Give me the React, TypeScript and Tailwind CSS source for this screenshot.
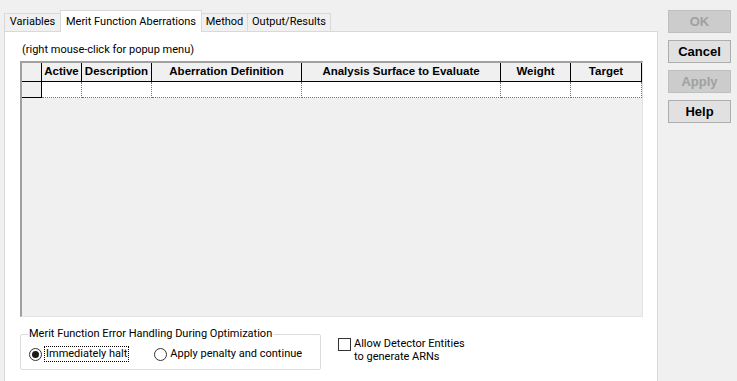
import React from 'react';

const ui = { fontFamily: 'Roboto, "Liberation Sans", sans-serif' };
const hdr = { fontFamily: '"Liberation Sans", Arial, sans-serif' };

const columns = [
  { label: 'Active', w: 'w-[40px]' },
  { label: 'Description', w: 'w-[70px]' },
  { label: 'Aberration Definition', w: 'w-[150px]' },
  { label: 'Analysis Surface to Evaluate', w: 'w-[199px]' },
  { label: 'Weight', w: 'w-[70px]' },
  { label: 'Target', w: 'w-[71px]' },
];

const tabs = [
  { label: 'Variables', w: 'w-[57px]' },
  { label: 'Merit Function Aberrations', w: 'w-[142px]' },
  { label: 'Method', w: 'w-[47px]' },
  { label: 'Output/Results', w: 'w-[84px]' },
];

function Tabs() {
  return (
    <div className="flex items-end h-[21px] relative z-10 whitespace-nowrap">
      {tabs.map((t, i) =>
        i === 1 ? (
          <div
            key={t.label}
            className={`${t.w} h-[22px] -mb-[1px] -ml-[1px] bg-white border border-b-0 border-[#d9d9d9] flex justify-center pt-[3px] text-[11px] text-black`}
          >
            {t.label}
          </div>
        ) : (
          <div
            key={t.label}
            className={`${t.w} h-[18px] bg-[#f0f0f0] border border-b-0 border-[#d9d9d9] flex items-center justify-center text-[11px] text-black ${i > 1 ? '-ml-[1px]' : ''}`}
          >
            {t.label}
          </div>
        )
      )}
    </div>
  );
}

function Grid() {
  return (
    <div className="w-[623px] h-[256px] border-t-2 border-l-2 border-t-[#a0a0a0] border-l-[#a0a0a0] border-r border-b border-r-[#e3e3e3] border-b-[#e3e3e3] bg-[#f0f0f0]">
      <div className="flex h-[19px] text-[11.5px] font-bold text-black" style={hdr}>
        <div className="w-[20px] border-r border-b border-black bg-[#f0f0f0]" />
        {columns.map((c) => (
          <div
            key={c.label}
            className={`${c.w} border-r border-b border-black bg-[#f0f0f0] flex items-center justify-center leading-none`}
          >
            {c.label}
          </div>
        ))}
      </div>
      <div className="flex h-[16px]">
        <div className="w-[20px] border-r border-b border-black bg-[#f0f0f0]" />
        {columns.map((c) => (
          <div key={c.label} className={`${c.w} bg-white border-r border-b border-dotted border-[#707070]`} />
        ))}
      </div>
    </div>
  );
}

function DlgButton({ label, disabled }: { label: string; disabled?: boolean }) {
  return (
    <button
      className={`w-[63px] h-[23px] border text-[13px] font-bold flex items-center justify-center ${
        disabled ? 'bg-[#cccccc] border-[#bfbfbf] text-[#a0a0a0]' : 'bg-[#e1e1e1] border-[#adadad] text-black'
      }`}
      style={hdr}
    >
      {label}
    </button>
  );
}

export default function App() {
  return (
    <div className="w-[737px] h-[381px] bg-[#f0f0f0] flex overflow-hidden" style={ui}>
      <div className="pl-[4px] pt-[10px] flex flex-col">
        <Tabs />
        <div className="w-[654px] h-[350px] bg-white border border-b-0 border-[#d9d9d9] pl-[15px] pt-[10px]">
          <div className="text-[11px] leading-[16px] text-black pl-[2px] mb-[3px] whitespace-nowrap">(right mouse-click for popup menu)</div>
          <Grid />
          <div className="flex mt-[10px] whitespace-nowrap">
            <fieldset className="w-[301px] h-[43px] border border-[#dcdcdc] rounded-[2px] px-[8px]">
              <legend className="text-[11px] leading-[14px] px-[1px] -ml-[1px] text-black">
                Merit Function Error Handling During Optimization
              </legend>
              <div className="flex items-center mt-[5px] text-[11px] text-black">
                <span className="w-[13px] h-[13px] rounded-full border border-[#333333] bg-white flex items-center justify-center">
                  <span className="w-[7px] h-[7px] rounded-full bg-[#1a1a1a]" />
                </span>
                <span className="ml-[2px] px-[1px] h-[16px] leading-[14px] border border-dotted border-black">Immediately halt</span>
                <span className="ml-[25px] w-[13px] h-[13px] rounded-full border border-[#333333] bg-white" />
                <span className="ml-[3px]">Apply penalty and continue</span>
              </div>
            </fieldset>
            <div className="ml-[17px] mt-[10px] flex items-start">
              <span className="mt-[1px] w-[13px] h-[13px] border border-[#333333] bg-white" />
              <div className="ml-[3px] text-[11px] leading-[13px] text-black">
                Allow Detector Entities
                <br />
                to generate ARNs
              </div>
            </div>
          </div>
        </div>
      </div>
      <div className="ml-[10px] pt-[10px] flex flex-col gap-[7px]">
        <DlgButton label="OK" disabled />
        <DlgButton label="Cancel" />
        <DlgButton label="Apply" disabled />
        <DlgButton label="Help" />
      </div>
    </div>
  );
}
